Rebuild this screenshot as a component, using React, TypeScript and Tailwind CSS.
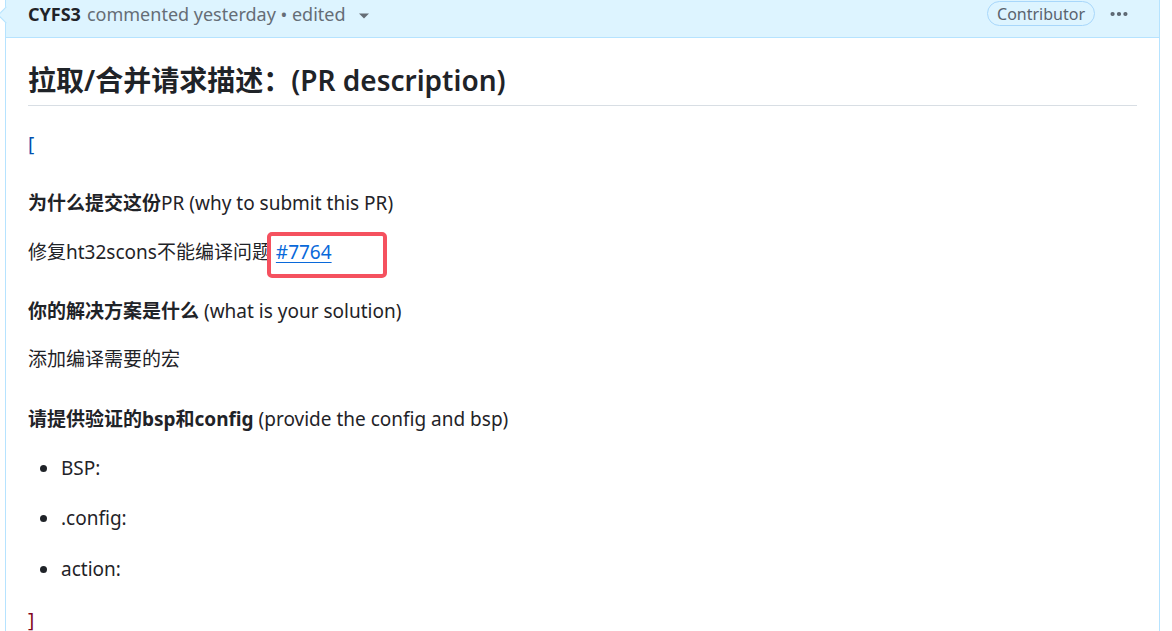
import { Ellipsis } from 'lucide-react'

const font = '[font-family:"Noto_Sans","Noto_Sans_CJK_SC",sans-serif]'

function Header() {
    return (
        <div className="relative flex items-center h-[38px] bg-[#ddf4ff] border-b border-[#b6e3ff] pl-[22px] pr-[26px]">
            <div className="absolute left-[-6px] top-[9px] w-[12px] h-[12px] rotate-45 bg-[#ddf4ff] border-l border-b border-[#b6e3ff]"></div>
            <div className="flex items-center gap-[6px] text-[18px] leading-[27px] -mt-[8px]">
                <span className="font-bold text-[#1f2328]">CYFS3</span>
                <span className="text-[#656d76]">commented yesterday • edited</span>
                <svg width="12" height="8" viewBox="0 0 12 8" className="ml-[6px] mt-[3px]">
                    <path d="M1 1.5h10L6 6.5z" fill="#656d76" />
                </svg>
            </div>
            <div className="ml-auto flex items-center gap-[10px] -mt-[10px]">
                <span className="flex items-center h-[25px] px-[9px] rounded-full border border-[#a8d7fb] text-[16px] text-[#59636e]">
                    Contributor
                </span>
                <Ellipsis className="w-[28px] h-[22px] text-[#59636e]" strokeWidth={2.6} />
            </div>
        </div>
    )
}

function Line({ top, children }: { top: string; children: React.ReactNode }) {
    return <div className={`${top} h-[27px] leading-[27px] text-[19px]`}>{children}</div>
}

function Bullet({ top, text }: { top: string; text: string }) {
    return (
        <div className={`${top} flex items-center h-[27px] leading-[27px] text-[19px] pl-[12px]`}>
            <span className="w-[7px] h-[7px] rounded-full bg-[#1f2328] mr-[14px]"></span>
            {text}
        </div>
    )
}

export default function App() {
    return (
        <div className={`w-[1172px] h-[631px] overflow-hidden bg-white ${font} text-[#1f2328]`}>
            <div className="ml-[5px] w-[1155px] h-[660px] border-x border-[#b6e3ff] bg-white">
                <Header />
                <div className="pl-[22px] pr-[22px]">
                    <div className="mt-[24px] pb-[7px] border-b border-[#d8dee4] text-[28px] leading-[36px] font-semibold">
                        拉取/合并请求描述：(PR description)
                    </div>
                    <Line top="mt-[25px]">
                        <span className="text-[#0550ae]">[</span>
                    </Line>
                    <Line top="mt-[32px]">
                        <span className="font-bold">为什么提交这份</span>PR (why to submit this PR)
                    </Line>
                    <Line top="mt-[22px]">
                        修复ht32scons不能编译问题{' '}
                        <span className="relative">
                            <a className="text-[#0969da] underline underline-offset-[3px]">#7764</a>
                            <span className="absolute left-[-9px] top-[-7px] w-[120px] h-[46px] border-[4px] border-[#f5515f] rounded-[5px]"></span>
                        </span>
                    </Line>
                    <Line top="mt-[32px]">
                        <span className="font-bold">你的解决方案是什么</span> (what is your solution)
                    </Line>
                    <Line top="mt-[21px]">添加编译需要的宏</Line>
                    <Line top="mt-[33px]">
                        <span className="font-bold">请提供验证的bsp和config</span> (provide the config and bsp)
                    </Line>
                    <Bullet top="mt-[22px]" text="BSP:" />
                    <Bullet top="mt-[23px]" text=".config:" />
                    <Bullet top="mt-[24px]" text="action:" />
                    <Line top="mt-[24px]">
                        <span className="text-[#82071e]">]</span>
                    </Line>
                </div>
            </div>
        </div>
    )
}
